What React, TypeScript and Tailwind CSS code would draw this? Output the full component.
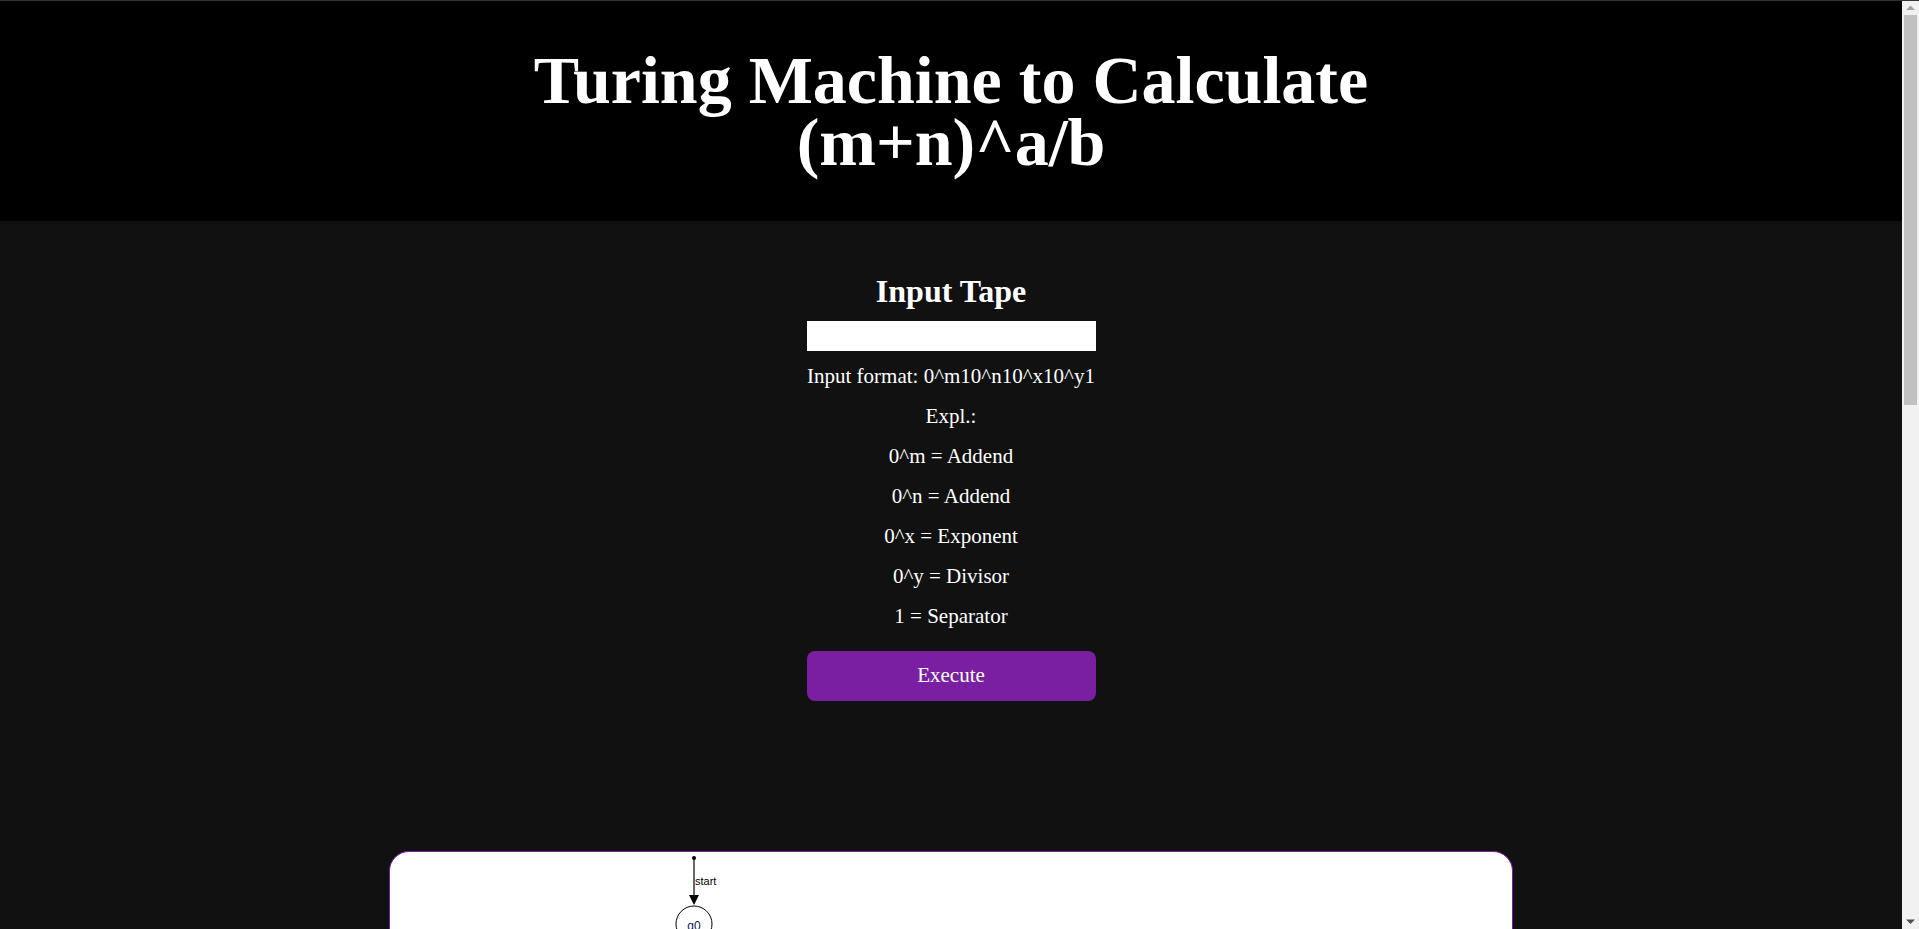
const serif = { fontFamily: '"Liberation Serif", "Times New Roman", serif' }

const Diagram = () => {
    return (
        <svg width="1122" height="600" className="block" style={{ fontFamily: '"Liberation Sans", Arial, sans-serif' }}>
            <circle cx="304" cy="6" r="2" fill="#000" />
            <line x1="304" y1="6" x2="304" y2="44" stroke="#000" strokeWidth="1.2" />
            <polygon points="299,43 309,43 304,53" fill="#000" />
            <text x="305" y="33" fontSize="11" fill="#000">start</text>
            <circle cx="304" cy="72" r="18" fill="none" stroke="#000" strokeWidth="1" />
            <text x="304" y="78" fontSize="12" fill="#0a1a4a" textAnchor="middle">q0</text>
            <line x1="304" y1="90" x2="304" y2="150" stroke="#000" strokeWidth="1" />
            <polygon points="300,142 308,142 304,151" fill="#000" />
            <circle cx="304" cy="170" r="18" fill="none" stroke="#000" strokeWidth="1" />
            <text x="304" y="175" fontSize="12" fill="#0a1a4a" textAnchor="middle">q1</text>
        </svg>
    )
}

// the browser's scrollbar, drawn since the headless page hides it
const ScrollBar = () => {
    return (
        <div className="fixed top-[1px] right-0 bottom-0 w-[17px] bg-[#f1f1f1] flex flex-col items-center">
            <svg width="17" height="14" className="shrink-0">
                <polygon points="4,9 13,9 8.5,4.5" fill="#a3a3a3" />
            </svg>
            <div className="w-[13px] h-[390px] bg-[#c1c1c1]" />
            <div className="flex-1" />
            <svg width="17" height="14" className="shrink-0">
                <polygon points="4,4.5 13,4.5 8.5,9" fill="#505050" />
            </svg>
        </div>
    )
}

const App: React.FC = () => {
    const lines = [
        "Input format: 0^m10^n10^x10^y1",
        "Expl.:",
        "0^m = Addend",
        "0^n = Addend",
        "0^x = Exponent",
        "0^y = Divisor",
        "1 = Separator",
    ]

    return (
        <div className="min-h-screen bg-[#111111] text-white border-t border-[#333333] pr-[17px]" style={serif}>
            <header className="bg-black pt-[48px] pb-[48px]">
                <h1 className="text-center text-[68px] leading-[62px] font-bold">
                    Turing Machine to Calculate
                    <br />
                    (m+n)^a/b
                </h1>
            </header>

            <main className="flex flex-col items-center pt-[50px]">
                <h2 className="text-[32px] leading-[40px] font-bold">Input Tape</h2>
                <input type="text" className="mt-[10px] w-[289px] h-[30px] bg-white text-black px-2 outline-none" />
                <div className="mt-[5px] flex flex-col items-center">
                    {lines.map((l) => (
                        <p key={l} className="text-[21px] leading-[40px]">{l}</p>
                    ))}
                </div>
                <button className="mt-[15px] w-[289px] h-[50px] rounded-lg bg-[#7b1fa2] text-[21px] text-white">
                    Execute
                </button>
            </main>

            <section className="pt-[150px] pb-[200px]">
                <div className="mx-auto w-[1124px] h-[2700px] bg-white border border-[#7b1fa2] rounded-[20px] overflow-hidden">
                    <Diagram />
                </div>
            </section>

            <ScrollBar />
        </div>
    )
}

export default App
